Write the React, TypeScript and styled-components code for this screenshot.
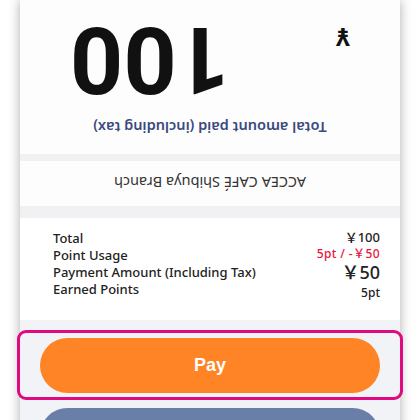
import styled, { createGlobalStyle } from 'styled-components';

const GlobalStyle = createGlobalStyle`
    html, body {
        margin: 0;
        padding: 0;
        background: #ffffff;
    }
    body {
        font-family: "Noto Sans", "Noto Sans CJK JP", sans-serif;
        color: #222;
    }
`

type SummaryValue = {
    text: string,
    size: number,
    lh: number,
    red?: boolean
};

const labels = ['Total', 'Point Usage', 'Payment Amount (Including Tax)', 'Earned Points'];

const values: SummaryValue[] = [
    { text: '￥100', size: 13, lh: 15 },
    { text: '5pt / -￥50', size: 12, lh: 17, red: true },
    { text: '￥50', size: 18, lh: 20 },
    { text: '5pt', size: 12, lh: 22 },
];

function App() {
    return (
        <Page>
            <GlobalStyle />
            <Card>
                {/* shown to the cashier, so it is turned upside down */}
                <AmountSection>
                    <AmountLabel>Total amount paid (including tax)</AmountLabel>
                    <AmountRow>
                        <Yen>¥</Yen>
                        <AmountValue>100</AmountValue>
                    </AmountRow>
                </AmountSection>

                <StoreSection>
                    <StoreName>ACCEA CAFÉ Shibuya Branch</StoreName>
                </StoreSection>

                <Summary>
                    <LabelColumn>
                        {labels.map((label) => (
                            <Label key={label}>{label}</Label>
                        ))}
                    </LabelColumn>
                    <ValueColumn>
                        {values.map((v) => (
                            <Value key={v.text} $size={v.size} $lh={v.lh} $red={v.red}>
                                {v.text}
                            </Value>
                        ))}
                    </ValueColumn>
                </Summary>

                <Actions>
                    <Highlight>
                        <PayButton>Pay</PayButton>
                    </Highlight>
                    <SecondaryButton />
                </Actions>
            </Card>
        </Page>
    );
}

export default App;

const Page = styled.div`
    width: 420px;
    height: 420px;
    padding: 0 20px;
    box-sizing: border-box;
    overflow: hidden;
`

const Card = styled.div`
    width: 380px;
    background-color: #f1f1f3;
    box-shadow: 0 0 11px rgba(0, 0, 0, 0.32);
    display: flex;
    flex-direction: column;
`

const AmountSection = styled.section`
    height: 154px;
    box-sizing: border-box;
    padding-top: 17px;
    background-color: #fdfdfd;
    transform: rotate(180deg);
    display: flex;
    flex-direction: column;
    align-items: center;
    gap: 14px;
`

const AmountLabel = styled.p`
    margin: 0;
    font-size: 14.5px;
    line-height: 18px;
    font-weight: 600;
    color: #3b4a7e;
`

const AmountRow = styled.div`
    align-self: stretch;
    display: flex;
    justify-content: space-between;
    align-items: baseline;
    padding: 0 50px;
    color: #111;
`

const Yen = styled.span`
    font-size: 25px;
    font-weight: 700;
    line-height: 1;
`

const AmountValue = styled.span`
    font-family: Roboto, "Noto Sans", sans-serif;
    font-size: 93px;
    font-weight: 700;
    line-height: 92px;
`

const StoreSection = styled.section`
    height: 45px;
    margin-top: 7px;
    background-color: #fdfdfd;
    display: flex;
    align-items: center;
    justify-content: center;
    transform: rotate(180deg);
`

const StoreName = styled.span`
    font-size: 14.5px;
    color: #333;
`

const Summary = styled.section`
    height: 102px;
    box-sizing: border-box;
    margin-top: 12px;
    padding: 12px 20px 0 33px;
    background-color: #ffffff;
    display: flex;
    justify-content: space-between;
`

const LabelColumn = styled.div`
    display: flex;
    flex-direction: column;
`

const Label = styled.span`
    font-size: 13px;
    line-height: 17px;
    font-weight: 500;
    color: #222;
`

const ValueColumn = styled.div`
    display: flex;
    flex-direction: column;
    align-items: flex-end;
`

const Value = styled.span<{ $size: number, $lh: number, $red?: boolean }>`
    font-size: ${(p) => p.$size}px;
    line-height: ${(p) => p.$lh}px;
    font-weight: 500;
    letter-spacing: ${(p) => (p.$red ? '0.4px' : '0')};
    color: ${(p) => (p.$red ? '#e5173c' : '#222')};
`

const Actions = styled.div`
    padding-top: 10px;
    background-color: #f2f3f6;
    display: flex;
    flex-direction: column;
`

const Highlight = styled.div`
    margin: 0 -3px;
    border: 3px solid #e0097f;
    border-radius: 9px;
    padding: 5px 20px 4px;
`

const PayButton = styled.button`
    display: block;
    width: 100%;
    height: 55px;
    border: none;
    border-radius: 28px;
    background-color: #fe8426;
    color: #fff;
    font-family: "Liberation Sans", Arial, sans-serif;
    font-size: 18px;
    font-weight: 700;
`

const SecondaryButton = styled.div`
    height: 55px;
    margin: 8px 20px 0;
    border-radius: 28px;
    background-color: #6a7fa8;
`
